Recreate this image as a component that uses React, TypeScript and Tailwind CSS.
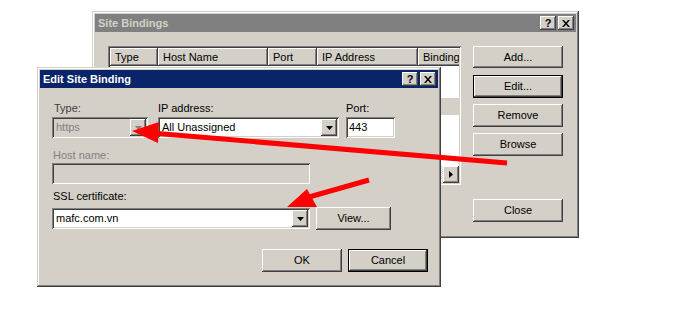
import type { ReactNode } from "react";

const raised =
  "bg-[#d4d0c8] shadow-[inset_-1px_-1px_#404040,inset_1px_1px_#ffffff,inset_-2px_-2px_#808080,inset_2px_2px_#d4d0c8]";
const sunken =
  "shadow-[inset_1px_1px_#808080,inset_-1px_-1px_#ffffff,inset_2px_2px_#404040,inset_-2px_-2px_#d4d0c8]";

function TitleButton({ children }: { children: ReactNode }) {
  return (
    <div className={`${raised} w-[16px] h-[14px] flex items-center justify-center`}>
      {children}
    </div>
  );
}

function Window({
  title,
  active,
  className,
  children,
}: {
  title: string;
  active?: boolean;
  className: string;
  children: ReactNode;
}) {
  return (
    <div
      className={`absolute bg-[#d4d0c8] p-[3px] flex flex-col shadow-[inset_-1px_-1px_#404040,inset_1px_1px_#d4d0c8,inset_-2px_-2px_#808080,inset_2px_2px_#ffffff] ${className}`}
    >
      <div
        className={`h-[18px] flex items-center justify-between pl-[3px] pr-[2px] ${
          active ? "bg-[#0a246a] text-white" : "bg-[#808080] text-[#d4d0c8]"
        }`}
      >
        <span className="font-bold text-[11px] leading-none">{title}</span>
        <div className="flex gap-[2px]">
          <TitleButton>
            <span className="text-black font-bold text-[11px] leading-none">?</span>
          </TitleButton>
          <TitleButton>
            <svg width="8" height="7" viewBox="0 0 8 7">
              <path d="M0 0h2l2 2.5L6 0h2L5 3.5 8 7H6L4 4.5 2 7H0l3-3.5z" fill="#000" />
            </svg>
          </TitleButton>
        </div>
      </div>
      {children}
    </div>
  );
}

function Button({
  label,
  isDefault,
  className,
}: {
  label: string;
  isDefault?: boolean;
  className: string;
}) {
  return (
    <div className={`${isDefault ? "border border-black" : ""} ${className}`}>
      <div className={`${raised} w-full h-full flex items-center justify-center text-black`}>
        {label}
      </div>
    </div>
  );
}

function DropArrow({ disabled }: { disabled?: boolean }) {
  return (
    <div className={`${raised} w-[16px] h-[17px] flex items-center justify-center`}>
      <svg width="7" height="4" viewBox="0 0 7 4">
        <path d="M0 0h7L3.5 4z" fill={disabled ? "#808080" : "#000"} />
      </svg>
    </div>
  );
}

function Combo({
  value,
  disabled,
  className,
}: {
  value: string;
  disabled?: boolean;
  className: string;
}) {
  return (
    <div
      className={`${sunken} ${disabled ? "bg-[#d4d0c8] text-[#808080]" : "bg-white text-black"} h-[21px] p-[2px] flex items-center ${className}`}
    >
      <span className="flex-1 pl-[2px]">{value}</span>
      <DropArrow disabled={disabled} />
    </div>
  );
}

function SiteBindings() {
  const cols = [
    { name: "Type", w: "w-[48px]" },
    { name: "Host Name", w: "w-[110px]" },
    { name: "Port", w: "w-[49px]" },
    { name: "IP Address", w: "w-[101px]" },
    { name: "Binding", w: "w-[60px]" },
  ];
  return (
    <Window title="Site Bindings" className="left-[92px] top-[11px] w-[487px] h-[227px]">
      <div className="flex pt-[14px] pl-[13px]">
        <div className={`${sunken} bg-white w-[353px] h-[139px] p-[2px] flex flex-col`}>
          <div className="flex h-[18px] overflow-hidden shrink-0">
            {cols.map((c) => (
              <div key={c.name} className={`${raised} ${c.w} shrink-0 flex items-center pl-[5px]`}>
                {c.name}
              </div>
            ))}
          </div>
          <div className="h-[32px]" />
          <div className="h-[17px] bg-[#d4d0c8]" />
          <div className="flex-1" />
          <div className="h-[17px] flex">
            <div className={`${raised} w-[16px] h-[17px]`} />
            <div className="flex-1 bg-[repeating-conic-gradient(#d4d0c8_0_25%,#ffffff_0_50%)] bg-[length:2px_2px]" />
            <div className={`${raised} w-[16px] h-[17px] flex items-center justify-center`}>
              <svg width="4" height="7" viewBox="0 0 4 7">
                <path d="M0 0v7l4-3.5z" fill="#000" />
              </svg>
            </div>
          </div>
        </div>
        <div className="flex flex-col ml-[12px] w-[90px]">
          <Button label="Add..." className="h-[22px]" />
          <Button label="Edit..." isDefault className="h-[23px] mt-[7px]" />
          <Button label="Remove" className="h-[23px] mt-[6px]" />
          <Button label="Browse" className="h-[23px] mt-[6px]" />
          <Button label="Close" className="h-[23px] mt-[43px]" />
        </div>
      </div>
    </Window>
  );
}

function EditBinding() {
  return (
    <Window title="Edit Site Binding" active className="left-[37px] top-[67px] w-[404px] h-[220px]">
      <div className="flex flex-col pl-[12px] pt-[14px]">
        <div className="flex">
          <div className="flex flex-col w-[96px]">
            <span className="h-[13px] leading-[13px] pl-[2px] text-[#404040]">Type:</span>
            <Combo value="https" disabled className="mt-[2px]" />
          </div>
          <div className="flex flex-col w-[181px] ml-[10px]">
            <span className="h-[13px] leading-[13px]">IP address:</span>
            <Combo value="All Unassigned" className="mt-[2px]" />
          </div>
          <div className="flex flex-col w-[49px] ml-[7px]">
            <span className="h-[13px] leading-[13px]">Port:</span>
            <div className={`${sunken} bg-white h-[21px] mt-[2px] flex items-center pl-[3px]`}>443</div>
          </div>
        </div>
        <span className="h-[13px] leading-[13px] mt-[11px] pl-[1px] text-[#808080]">Host name:</span>
        <div className={`${sunken} w-[258px] h-[21px] mt-[1px]`} />
        <span className="h-[13px] leading-[13px] mt-[6px] pl-[1px]">SSL certificate:</span>
        <div className="flex items-start mt-[4px]">
          <Combo value="mafc.com.vn" className="w-[258px] mt-[1px]" />
          <Button label="View..." className="w-[75px] h-[23px] ml-[6px]" />
        </div>
        <div className="flex justify-end gap-[6px] mt-[19px] pr-[10px]">
          <Button label="OK" className="w-[80px] h-[23px]" />
          <Button label="Cancel" isDefault className="w-[80px] h-[23px]" />
        </div>
      </div>
    </Window>
  );
}

export default function App() {
  return (
    <div className="relative w-[695px] h-[325px] bg-white overflow-hidden text-[11px] text-black font-['Liberation_Sans',Arial,sans-serif]">
      <SiteBindings />
      <EditBinding />
      <svg className="absolute left-0 top-0 pointer-events-none" width="695" height="325">
        <line x1="507" y1="163" x2="152" y2="133" stroke="#ff0000" strokeWidth="5" />
        <polygon points="132,131 159,122 158,143" fill="#ff0000" />
        <line x1="369" y1="180" x2="302" y2="199" stroke="#ff0000" strokeWidth="5" />
        <polygon points="287,207 307,189 317,207" fill="#ff0000" />
      </svg>
    </div>
  );
}
